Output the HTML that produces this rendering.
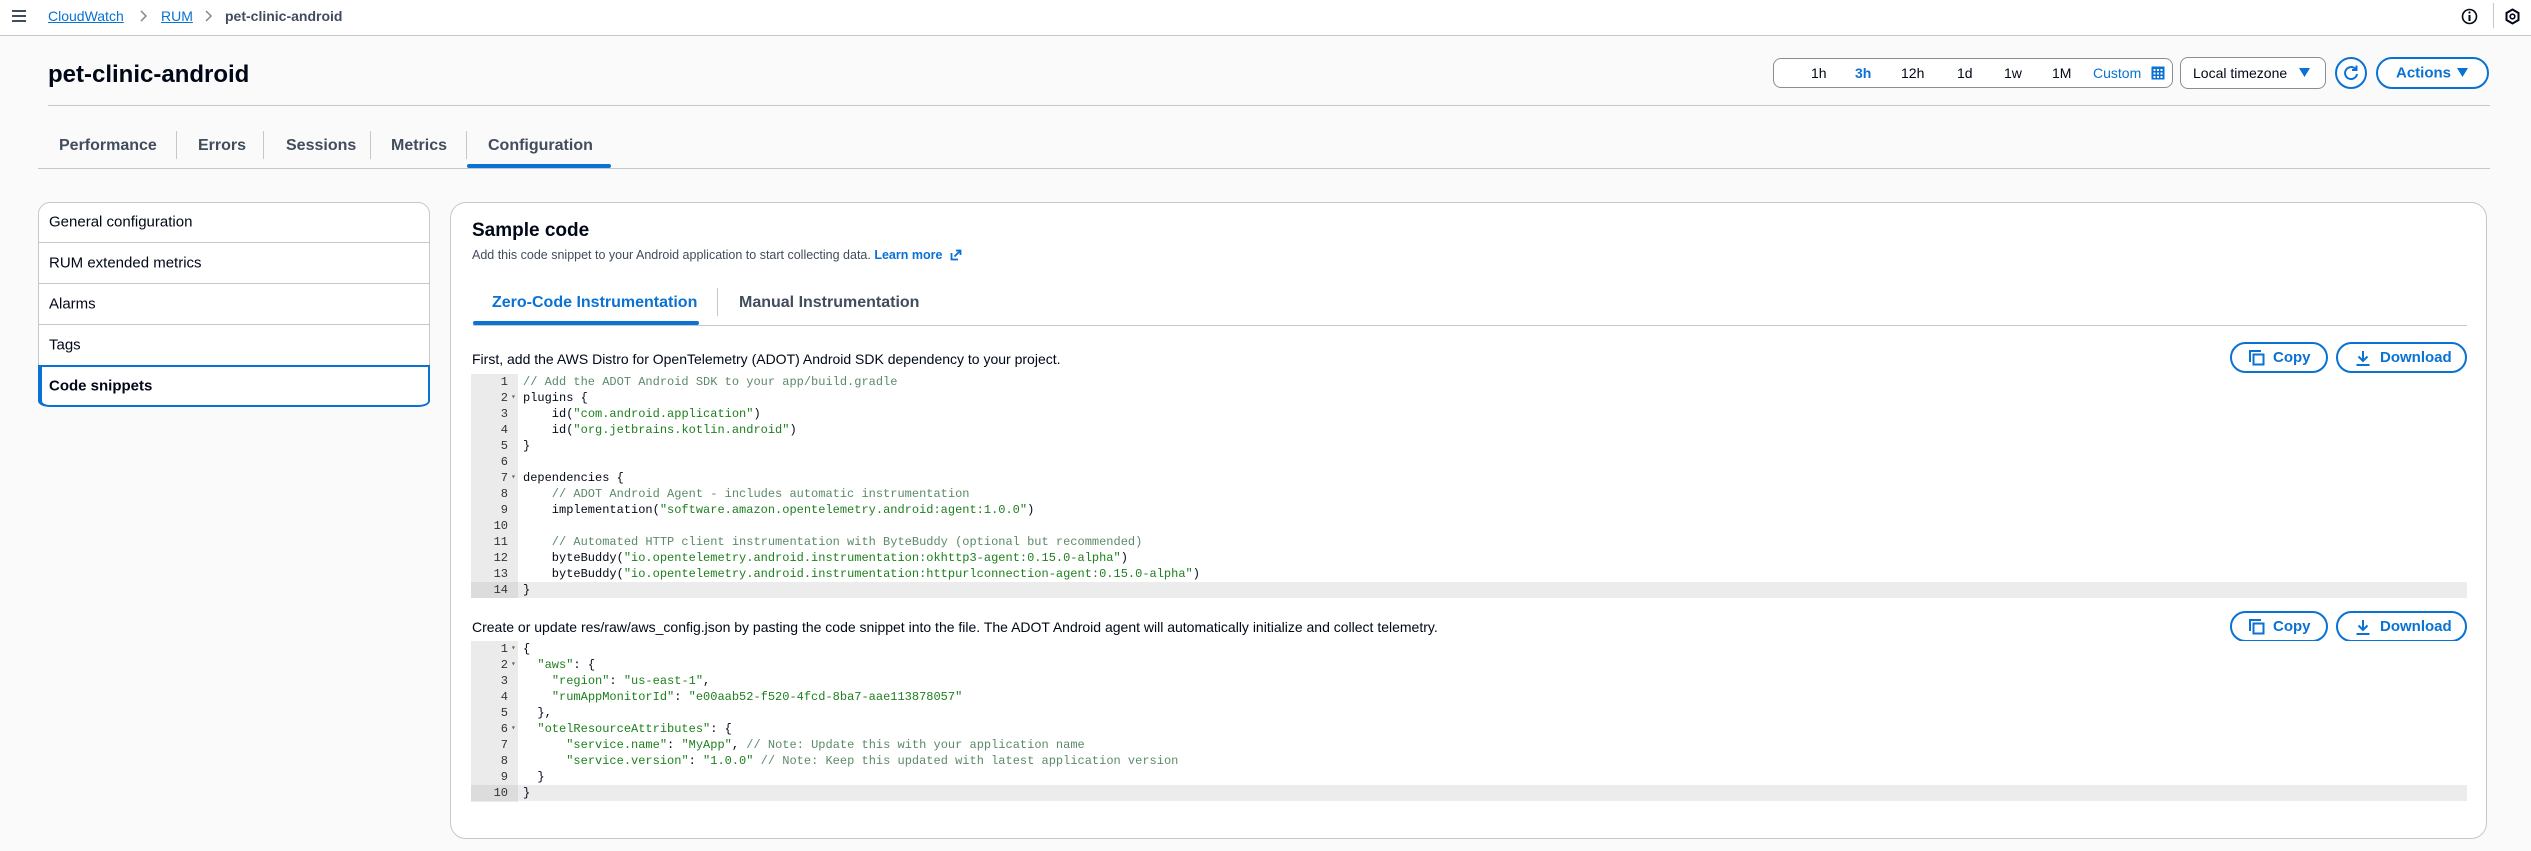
<!DOCTYPE html>
<html><head><meta charset="utf-8"><style>
*{box-sizing:border-box;margin:0;padding:0}
body{width:2531px;height:851px;background:#fafafa;font-family:"Liberation Sans",Arial,sans-serif;color:#000716;position:relative;overflow:hidden}
.a{position:absolute;white-space:nowrap}
.vc{transform:translateY(-50%)}
.blue{color:#0972d3}
.code{position:absolute;left:471px;width:1996px;background:#fff;font-family:"Liberation Mono",monospace;font-size:12px}
.code .g{position:absolute;left:0;top:0;bottom:0;width:47px;background:#ebebeb}
.ln{position:absolute;left:0;width:1996px;height:16px;line-height:16px;white-space:pre}
.ln .n{position:absolute;left:0;width:37px;text-align:right;color:#333}
.ln .f{position:absolute;left:40px;color:#666;font-size:8px}
.ln .t{position:absolute;left:52px}
.ln.act{background:#ececec}
.ln.act .n{background:#dcdcdc;width:47px;padding-right:10px}
.c{color:#5b8a68}
.s{color:#1d7f1d}
.btn{position:absolute;height:31px;border:2px solid #0972d3;border-radius:16px;color:#0972d3;font-weight:bold;font-size:15px;line-height:27px}
.tab{position:absolute;top:146px;transform:translateY(-50%);font-size:16px;font-weight:bold;color:#414d5c}
.dv{position:absolute;width:1px;background:#c6c6cd}
.nav{position:absolute;left:49px;font-size:15px;color:#000716;transform:translateY(-50%)}
</style></head><body>
<div class="a" style="left:0;top:0;width:2531px;height:36px;background:#fff;border-bottom:1px solid #c6c6cd"></div>
<svg class="a" style="left:11px;top:9px" width="16" height="14"><g stroke="#414d5c" stroke-width="2"><line x1="1" y1="2" x2="15" y2="2"/><line x1="1" y1="7" x2="15" y2="7"/><line x1="1" y1="12" x2="15" y2="12"/></g></svg>
<div class="a vc blue" style="left:48px;top:16px;font-size:14px;text-decoration:underline">CloudWatch</div>
<svg class="a" style="left:140px;top:10px" width="8" height="12"><path d="M1 1l5 5-5 5" stroke="#7d8998" stroke-width="1.5" fill="none"/></svg>
<div class="a vc blue" style="left:161px;top:16px;font-size:14px;text-decoration:underline">RUM</div>
<svg class="a" style="left:205px;top:10px" width="8" height="12"><path d="M1 1l5 5-5 5" stroke="#7d8998" stroke-width="1.5" fill="none"/></svg>
<div class="a vc" style="left:225px;top:16px;font-size:14px;font-weight:bold;color:#414d5c">pet-clinic-android</div>
<svg class="a" style="left:2461px;top:8px" width="17" height="17"><circle cx="8.5" cy="8.5" r="7" stroke="#000716" stroke-width="1.6" fill="none"/><line x1="8.5" y1="7" x2="8.5" y2="13" stroke="#000716" stroke-width="2"/><circle cx="8.5" cy="4.5" r="1.1" fill="#000716"/></svg>
<div class="dv" style="left:2493px;top:3px;height:25px"></div>
<svg class="a" style="left:2505px;top:8px" width="15" height="17"><path d="M7.5 1.5l6 3.5v7l-6 3.5-6-3.5v-7z" stroke="#000716" stroke-width="2" fill="none"/><circle cx="7.5" cy="8.5" r="2.3" stroke="#000716" stroke-width="1.6" fill="none"/></svg>

<div class="a vc" style="left:48px;top:75px;font-size:24px;font-weight:bold">pet-clinic-android</div>
<div class="a" style="left:1773px;top:58px;width:400px;height:30px;border:1px solid #8c8c94;border-radius:8px;background:#fff"></div>
<div class="a vc" style="left:1811px;top:73px;font-size:14px">1h</div>
<div class="a vc blue" style="left:1855px;top:73px;font-size:14px;font-weight:bold">3h</div>
<div class="a vc" style="left:1901px;top:73px;font-size:14px">12h</div>
<div class="a vc" style="left:1957px;top:73px;font-size:14px">1d</div>
<div class="a vc" style="left:2004px;top:73px;font-size:14px">1w</div>
<div class="a vc" style="left:2052px;top:73px;font-size:14px">1M</div>
<div class="a vc blue" style="left:2093px;top:73px;font-size:14px">Custom</div>
<svg class="a" style="left:2151px;top:66px" width="14" height="14"><rect x="0.5" y="0.5" width="13" height="13" fill="#0972d3"/><g fill="#fff"><rect x="2.5" y="3" width="2" height="2"/><rect x="6" y="3" width="2" height="2"/><rect x="9.5" y="3" width="2" height="2"/><rect x="2.5" y="6.5" width="2" height="2"/><rect x="6" y="6.5" width="2" height="2"/><rect x="9.5" y="6.5" width="2" height="2"/><rect x="2.5" y="10" width="2" height="2"/><rect x="6" y="10" width="2" height="2"/><rect x="9.5" y="10" width="2" height="2"/></g></svg>
<div class="a" style="left:2180px;top:57px;width:146px;height:32px;border:1px solid #8c8c94;border-radius:8px;background:#fff"></div>
<div class="a vc" style="left:2193px;top:73px;font-size:14px">Local timezone</div>
<svg class="a" style="left:2299px;top:68px" width="11" height="9"><path d="M0 0h11L5.5 9z" fill="#0972d3"/></svg>
<div class="a" style="left:2335px;top:57px;width:32px;height:32px;border:2px solid #0972d3;border-radius:50%;background:#fff"></div>
<svg class="a" style="left:2341px;top:63px" width="20" height="20"><path d="M14.5 6A6 6 0 1 0 16 11" stroke="#0972d3" stroke-width="2" fill="none"/><path d="M15.5 2.5v4.5h-4.5" stroke="#0972d3" stroke-width="2" fill="none"/></svg>
<div class="a" style="left:2376px;top:57px;width:113px;height:32px;border:2px solid #0972d3;border-radius:16px;background:#fff"></div>
<div class="a vc blue" style="left:2396px;top:73px;font-size:15px;font-weight:bold">Actions</div>
<svg class="a" style="left:2457px;top:68px" width="11" height="9"><path d="M0 0h11L5.5 9z" fill="#0972d3"/></svg>
<div class="a" style="left:48px;top:105px;width:2442px;height:1px;background:#c6c6cd"></div>

<div class="tab" style="left:59px">Performance</div>
<div class="dv" style="left:176px;top:131px;height:28px"></div>
<div class="tab" style="left:198px">Errors</div>
<div class="dv" style="left:263px;top:131px;height:28px"></div>
<div class="tab" style="left:286px">Sessions</div>
<div class="dv" style="left:370px;top:131px;height:28px"></div>
<div class="tab" style="left:391px">Metrics</div>
<div class="dv" style="left:466px;top:131px;height:28px"></div>
<div class="tab blue" style="left:488px">Configuration</div>
<div class="a" style="left:38px;top:168px;width:2452px;height:1px;background:#c6c6cd"></div>
<div class="a" style="left:467px;top:164px;width:144px;height:4px;border-radius:2px;background:#0972d3"></div>

<div class="a" style="left:38px;top:202px;width:392px;height:205px;border:1px solid #c6c6cd;border-radius:12px;background:#fff"></div>
<div class="a" style="left:39px;top:242px;width:390px;height:1px;background:#c6c6cd"></div>
<div class="a" style="left:39px;top:283px;width:390px;height:1px;background:#c6c6cd"></div>
<div class="a" style="left:39px;top:324px;width:390px;height:1px;background:#c6c6cd"></div>
<div class="nav" style="top:222px">General configuration</div>
<div class="nav" style="top:263px">RUM extended metrics</div>
<div class="nav" style="top:304px">Alarms</div>
<div class="nav" style="top:345px">Tags</div>
<div class="a" style="left:38px;top:365px;width:392px;height:42px;border:2px solid #0972d3;border-left-width:4px;border-radius:0 0 12px 12px / 0 0 6px 6px;background:#fff"></div>
<div class="nav blue" style="top:386px;font-weight:bold">Code snippets</div>

<div class="a" style="left:450px;top:202px;width:2037px;height:637px;border:1px solid #c6c6cd;border-radius:16px;background:#fff"></div>
<div class="a vc" style="left:472px;top:231px;font-size:19px;font-weight:bold">Sample code</div>
<div class="a vc" style="left:472px;top:255px;font-size:12.5px;color:#414d5c">Add this code snippet to your Android application to start collecting data. <b class="blue">Learn more</b></div>
<svg class="a" style="left:950px;top:249px" width="12" height="12"><path d="M1.5 4v6.5h6.5" stroke="#0972d3" stroke-width="1.8" fill="none"/><path d="M4.5 7.5l6-6M6 1.5h4.5v4.5" stroke="#0972d3" stroke-width="1.8" fill="none"/></svg>
<div class="a vc blue" style="left:492px;top:303px;font-size:16px;font-weight:bold">Zero-Code Instrumentation</div>
<div class="dv" style="left:717px;top:288px;height:28px"></div>
<div class="a vc" style="left:739px;top:303px;font-size:16px;font-weight:bold;color:#414d5c">Manual Instrumentation</div>
<div class="a" style="left:473px;top:325px;width:1994px;height:1px;background:#c6c6cd"></div>
<div class="a" style="left:473px;top:321px;width:226px;height:4px;border-radius:2px;background:#0972d3"></div>

<div class="a vc" style="left:472px;top:359px;font-size:14px">First, add the AWS Distro for OpenTelemetry (ADOT) Android SDK dependency to your project.</div>
<div class="btn" style="left:2230px;top:342px;width:98px"><svg style="position:absolute;left:17px;top:6px" width="16" height="16"><path d="M1 12V1h11" stroke="#0972d3" stroke-width="2" fill="none"/><rect x="4.5" y="4.5" width="10" height="10" stroke="#0972d3" stroke-width="2" fill="none"/></svg><span style="position:absolute;left:41px">Copy</span></div>
<div class="btn" style="left:2336px;top:342px;width:131px"><svg style="position:absolute;left:17px;top:6px" width="16" height="17"><path d="M8 1v10M3.5 6.5L8 11l4.5-4.5M1.5 15h13" stroke="#0972d3" stroke-width="2" fill="none"/></svg><span style="position:absolute;left:42px">Download</span></div>

<div class="code" style="top:374px;height:224px"><div class="g"></div>
<div class="ln" style="top:0"><span class="n">1</span><span class="t c">// Add the ADOT Android SDK to your app/build.gradle</span></div>
<div class="ln" style="top:16px"><span class="n">2</span><span class="f">▾</span><span class="t">plugins {</span></div>
<div class="ln" style="top:32px"><span class="n">3</span><span class="t">    id(<span class="s">"com.android.application"</span>)</span></div>
<div class="ln" style="top:48px"><span class="n">4</span><span class="t">    id(<span class="s">"org.jetbrains.kotlin.android"</span>)</span></div>
<div class="ln" style="top:64px"><span class="n">5</span><span class="t">}</span></div>
<div class="ln" style="top:80px"><span class="n">6</span></div>
<div class="ln" style="top:96px"><span class="n">7</span><span class="f">▾</span><span class="t">dependencies {</span></div>
<div class="ln" style="top:112px"><span class="n">8</span><span class="t c">    // ADOT Android Agent - includes automatic instrumentation</span></div>
<div class="ln" style="top:128px"><span class="n">9</span><span class="t">    implementation(<span class="s">"software.amazon.opentelemetry.android:agent:1.0.0"</span>)</span></div>
<div class="ln" style="top:144px"><span class="n">10</span></div>
<div class="ln" style="top:160px"><span class="n">11</span><span class="t c">    // Automated HTTP client instrumentation with ByteBuddy (optional but recommended)</span></div>
<div class="ln" style="top:176px"><span class="n">12</span><span class="t">    byteBuddy(<span class="s">"io.opentelemetry.android.instrumentation:okhttp3-agent:0.15.0-alpha"</span>)</span></div>
<div class="ln" style="top:192px"><span class="n">13</span><span class="t">    byteBuddy(<span class="s">"io.opentelemetry.android.instrumentation:httpurlconnection-agent:0.15.0-alpha"</span>)</span></div>
<div class="ln act" style="top:208px"><span class="n">14</span><span class="t">}</span></div>
</div>

<div class="a vc" style="left:472px;top:627px;font-size:14px">Create or update res/raw/aws_config.json by pasting the code snippet into the file. The ADOT Android agent will automatically initialize and collect telemetry.</div>
<div class="btn" style="left:2230px;top:611px;width:98px"><svg style="position:absolute;left:17px;top:6px" width="16" height="16"><path d="M1 12V1h11" stroke="#0972d3" stroke-width="2" fill="none"/><rect x="4.5" y="4.5" width="10" height="10" stroke="#0972d3" stroke-width="2" fill="none"/></svg><span style="position:absolute;left:41px">Copy</span></div>
<div class="btn" style="left:2336px;top:611px;width:131px"><svg style="position:absolute;left:17px;top:6px" width="16" height="17"><path d="M8 1v10M3.5 6.5L8 11l4.5-4.5M1.5 15h13" stroke="#0972d3" stroke-width="2" fill="none"/></svg><span style="position:absolute;left:42px">Download</span></div>

<div class="code" style="top:641px;height:161px"><div class="g"></div>
<div class="ln" style="top:0"><span class="n">1</span><span class="f">▾</span><span class="t">{</span></div>
<div class="ln" style="top:16px"><span class="n">2</span><span class="f">▾</span><span class="t">  <span class="s">"aws"</span>: {</span></div>
<div class="ln" style="top:32px"><span class="n">3</span><span class="t">    <span class="s">"region"</span>: <span class="s">"us-east-1"</span>,</span></div>
<div class="ln" style="top:48px"><span class="n">4</span><span class="t">    <span class="s">"rumAppMonitorId"</span>: <span class="s">"e00aab52-f520-4fcd-8ba7-aae113878057"</span></span></div>
<div class="ln" style="top:64px"><span class="n">5</span><span class="t">  },</span></div>
<div class="ln" style="top:80px"><span class="n">6</span><span class="f">▾</span><span class="t">  <span class="s">"otelResourceAttributes"</span>: {</span></div>
<div class="ln" style="top:96px"><span class="n">7</span><span class="t">      <span class="s">"service.name"</span>: <span class="s">"MyApp"</span>, <span class="c">// Note: Update this with your application name</span></span></div>
<div class="ln" style="top:112px"><span class="n">8</span><span class="t">      <span class="s">"service.version"</span>: <span class="s">"1.0.0"</span> <span class="c">// Note: Keep this updated with latest application version</span></span></div>
<div class="ln" style="top:128px"><span class="n">9</span><span class="t">  }</span></div>
<div class="ln act" style="top:144px"><span class="n">10</span><span class="t">}</span></div>
</div>
</body></html>
